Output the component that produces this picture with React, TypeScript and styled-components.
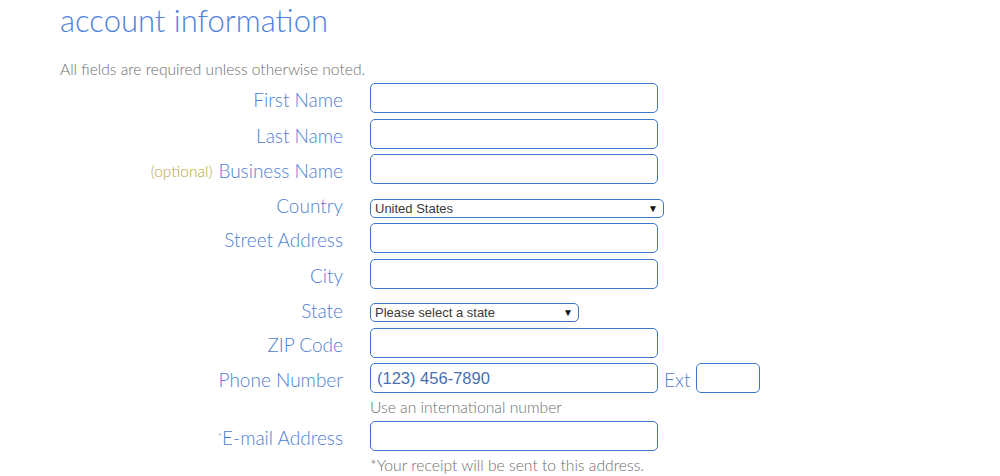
import React from "react";
import styled, { createGlobalStyle } from "styled-components";

const Global = createGlobalStyle`
  html, body { margin: 0; padding: 0; background: #fff; }
  body { font-family: Lato, "Open Sans", sans-serif; }
`;

const Page = styled.div`
  padding: 0 0 0 60px;
  width: 1000px;
  height: 476px;
  box-sizing: border-box;
  overflow: hidden;
`;

const Title = styled.h1`
  margin: 0;
  padding-top: 2px;
  font-family: Lato, sans-serif;
  font-weight: 300;
  font-size: 31px;
  line-height: 36px;
  color: #4f82de;
`;

const Note = styled.p`
  margin: 23px 0 0;
  font-family: Lato, sans-serif;
  font-weight: 300;
  font-size: 15.6px;
  line-height: 16px;
  color: #6f6f6f;
`;

const Form = styled.div`
  display: grid;
  grid-template-columns: 283px 1fr;
  column-gap: 27px;
  margin-top: 6px;
`;

const Label = styled.label<{ $h?: number }>`
  display: flex;
  align-items: center;
  justify-content: flex-end;
  box-sizing: border-box;
  padding-top: 3px;
  height: ${(p) => p.$h ?? 30}px;
  font-family: Lato, sans-serif;
  font-weight: 300;
  font-size: 19px;
  color: #4f80cf;
  white-space: nowrap;
`;

const Optional = styled.span`
  font-size: 15.5px;
  color: #b3a53c;
  margin-right: 6px;
`;

const Star = styled.sup`
  font-size: 10px;
  vertical-align: top;
  line-height: 1;
  margin-top: -4px;
`;

const Field = styled.div<{ $h?: number; $end?: boolean }>`
  display: flex;
  align-items: ${(p) => (p.$end ? "flex-end" : "center")};
  height: ${(p) => p.$h ?? 30}px;
  gap: 6px;
`;

const Spacer = styled.div<{ $h: number }>`
  grid-column: 1 / -1;
  height: ${(p) => p.$h}px;
`;

const Input = styled.input<{ $w?: number }>`
  box-sizing: border-box;
  width: ${(p) => p.$w ?? 288}px;
  height: 30px;
  border: 1px solid #3d77c7;
  border-radius: 5px;
  padding: 0 6px;
  font-family: Arial, "Liberation Sans", sans-serif;
  font-size: 16.5px;
  color: #4a6fb0;
  outline: none;
  background: #fff;
`;

const SelectBox = styled.div<{ $w: number }>`
  box-sizing: border-box;
  width: ${(p) => p.$w}px;
  height: 19px;
  border: 1px solid #3d77c7;
  border-radius: 5px;
  display: flex;
  align-items: center;
  justify-content: space-between;
  padding: 0 5px 0 4px;
  font-family: Arial, "Liberation Sans", sans-serif;
  font-size: 13px;
  color: #3a3a3a;
`;

const Arrow = styled.span`
  font-size: 10px;
  color: #111;
`;

const ExtLabel = styled.span`
  font-family: Lato, sans-serif;
  font-weight: 300;
  font-size: 19px;
  color: #4f80cf;
  padding-top: 3px;
`;

const Hint = styled.div`
  grid-column: 2;
  font-family: Lato, sans-serif;
  font-weight: 300;
  font-size: 15.7px;
  line-height: 28px;
  color: #6f6f6f;
`;

export default function App() {
  return (
    <Page>
      <Global />
      <Title>account information</Title>
      <Note>All fields are required unless otherwise noted.</Note>
      <Form>
        <Label>First Name</Label>
        <Field><Input /></Field>
        <Spacer $h={6} />
        <Label>Last Name</Label>
        <Field><Input /></Field>
        <Spacer $h={5} />
        <Label><Optional>(optional)</Optional>Business Name</Label>
        <Field><Input /></Field>
        <Spacer $h={6} />
        <Label $h={28}>Country</Label>
        <Field $h={28} $end>
          <SelectBox $w={294}>United States<Arrow>▼</Arrow></SelectBox>
        </Field>
        <Spacer $h={5} />
        <Label>Street Address</Label>
        <Field><Input /></Field>
        <Spacer $h={6} />
        <Label>City</Label>
        <Field><Input /></Field>
        <Spacer $h={6} />
        <Label $h={27}>State</Label>
        <Field $h={27} $end>
          <SelectBox $w={209}>Please select a state<Arrow>▼</Arrow></SelectBox>
        </Field>
        <Spacer $h={6} />
        <Label>ZIP Code</Label>
        <Field><Input /></Field>
        <Spacer $h={5} />
        <Label>Phone Number</Label>
        <Field>
          <Input defaultValue="(123) 456-7890" />
          <ExtLabel>Ext</ExtLabel>
          <Input $w={64} />
        </Field>
        <Hint>Use an international number</Hint>
        <Label><Star>*</Star>E-mail Address</Label>
        <Field><Input /></Field>
        <Hint>*Your receipt will be sent to this address.</Hint>
      </Form>
    </Page>
  );
}
